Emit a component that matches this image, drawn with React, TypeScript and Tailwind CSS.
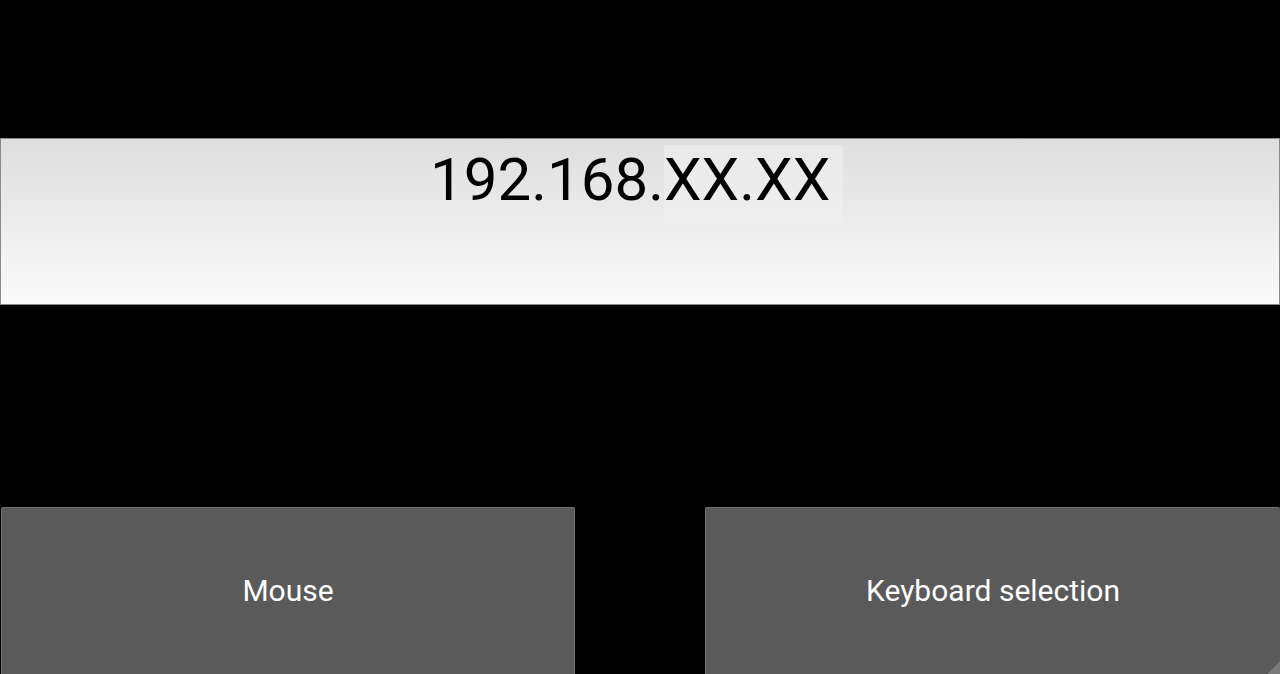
export default function App() {
  return (
    <div className="h-[674px] w-[1280px] overflow-hidden bg-black" style={{ fontFamily: 'Roboto, "Noto Sans", sans-serif' }}>
      {/* address field */}
      <div className="pt-[138px]">
        <div className="h-[167px] border border-[#8a8a8a] bg-gradient-to-b from-[#dedede] to-[#fbfbfb]">
          <div className="flex pl-[429px] pt-[6px]">
            <span className="text-[60px] leading-[70px] pb-[8px] text-black">192.168.</span>
            <span className="text-[60px] leading-[70px] pb-[8px] text-black bg-[#f0f0f0]/60 pr-[13px]">XX.XX</span>
          </div>
        </div>
      </div>

      {/* buttons */}
      <div className="flex justify-between pl-[1px] pt-[202px]">
        <button className="h-[170px] w-[574px] rounded-[2px] border-t border-x border-[#6f6f6f] bg-[#5a5a5a] pb-[4px] text-[30px] text-white">
          Mouse
        </button>
        <button className="relative h-[170px] w-[575px] rounded-[2px] border-t border-l border-[#6f6f6f] bg-[#5a5a5a] pb-[4px] text-[30px] text-white">
          Keyboard selection
          <span className="absolute bottom-[3px] right-0 h-[12px] w-[12px] bg-gradient-to-br from-transparent from-50% to-[#7a7a7a] to-50%" />
        </button>
      </div>
    </div>
  )
}
